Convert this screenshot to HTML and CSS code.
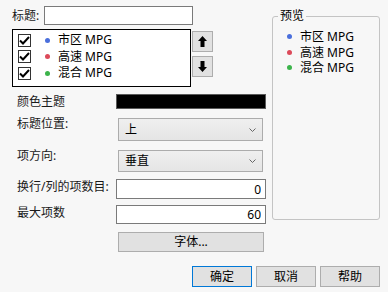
FILE: index.html
```html
<!DOCTYPE html>
<html lang="zh-CN">
<head>
    <meta charset="UTF-8">
    <title>图例设置</title>
    <link rel="stylesheet" href="styles.css">
</head>
<body>
    <div class="dialog">
        <div class="main">
            <div class="left">
                <div class="title-row">
                    <label class="title-label">标题:</label>
                    <input class="text-input title-input" type="text" value="">
                </div>
                <div class="list-row">
                    <div class="listbox">
                        <div class="item"><span class="check"><svg width="11" height="9" viewBox="0 0 11 9"><polyline points="1,4.5 4,7.5 10,1" fill="none" stroke="#000" stroke-width="2"/></svg></span><span class="dot blue"></span>市区 MPG</div>
                        <div class="item"><span class="check"><svg width="11" height="9" viewBox="0 0 11 9"><polyline points="1,4.5 4,7.5 10,1" fill="none" stroke="#000" stroke-width="2"/></svg></span><span class="dot red"></span>高速 MPG</div>
                        <div class="item"><span class="check"><svg width="11" height="9" viewBox="0 0 11 9"><polyline points="1,4.5 4,7.5 10,1" fill="none" stroke="#000" stroke-width="2"/></svg></span><span class="dot green"></span>混合 MPG</div>
                    </div>
                    <div class="arrows">
                        <button class="arrow-btn"><svg width="9" height="11" viewBox="0 0 9 11"><polygon points="4.5,0 9,5 6.5,5 6.5,11 2.5,11 2.5,5 0,5" fill="#000"/></svg></button>
                        <button class="arrow-btn"><svg width="9" height="11" viewBox="0 0 9 11"><polygon points="4.5,11 9,6 6.5,6 6.5,0 2.5,0 2.5,6 0,6" fill="#000"/></svg></button>
                    </div>
                </div>
                <div class="form">
                    <div class="row row-swatch">
                        <span class="label">颜色主题</span>
                        <span class="swatch"></span>
                    </div>
                    <div class="row row-pos">
                        <span class="label">标题位置:</span>
                        <div class="select"><span>上</span><svg width="7" height="4" viewBox="0 0 7 4"><polyline points="0.5,0.5 3.5,3.5 6.5,0.5" fill="none" stroke="#666" stroke-width="1"/></svg></div>
                    </div>
                    <div class="row row-dir">
                        <span class="label">项方向:</span>
                        <div class="select select-short"><span>垂直</span><svg width="7" height="4" viewBox="0 0 7 4"><polyline points="0.5,0.5 3.5,3.5 6.5,0.5" fill="none" stroke="#666" stroke-width="1"/></svg></div>
                    </div>
                    <div class="row row-wrap">
                        <span class="label">换行/列的项数目:</span>
                        <input class="text-input num-input" type="text" value="0">
                    </div>
                    <div class="row row-max">
                        <span class="label">最大项数</span>
                        <input class="text-input num-input num-short" type="text" value="60">
                    </div>
                    <div class="row row-font">
                        <span class="label"></span>
                        <button class="btn font-btn">字体...</button>
                    </div>
                </div>
            </div>
            <fieldset class="preview">
                <legend>预览</legend>
                <div class="preview-item"><span class="dot blue"></span>市区 MPG</div>
                <div class="preview-item"><span class="dot red"></span>高速 MPG</div>
                <div class="preview-item"><span class="dot green"></span>混合 MPG</div>
            </fieldset>
        </div>
        <div class="actions">
            <button class="btn action-btn default">确定</button>
            <button class="btn action-btn">取消</button>
            <button class="btn action-btn">帮助</button>
        </div>
    </div>
</body>
</html>
```

FILE: styles.css
```css
* {
    margin: 0;
    padding: 0;
    box-sizing: border-box;
}
body {
    width: 388px;
    height: 292px;
    background-color: #f7f7f7;
    font-family: "Noto Sans", "Noto Sans CJK SC", sans-serif;
    font-size: 12px;
    color: #1a1a1a;
    overflow: hidden;
}
button, input {
    font-family: inherit;
    font-size: 12px;
    color: #000;
}
.dialog {
    padding: 6px 8px 0 12px;
}
.main {
    display: flex;
    align-items: flex-start;
}
.left {
    width: 254px;
}
.title-row {
    display: flex;
    align-items: center;
    height: 19px;
}
.title-label {
    width: 32px;
    line-height: 14px;
}
.text-input {
    background-color: #fff;
    border: 1px solid #7a7a7a;
    outline: none;
    padding: 0 4px;
}
.title-input {
    width: 149px;
    height: 19px;
}
.list-row {
    display: flex;
    margin-top: 4px;
}
.listbox {
    width: 179px;
    height: 58px;
    border: 1px solid #000;
    background-color: #fff;
    padding: 2px 0 0 5px;
}
.item {
    display: flex;
    align-items: center;
    height: 16.5px;
    line-height: 16px;
    color: #000;
}
.check {
    display: flex;
    align-items: center;
    justify-content: center;
    width: 13px;
    height: 13px;
    border: 1px solid #333;
    background-color: #fff;
}
.dot {
    display: inline-block;
    width: 5px;
    height: 5px;
    border-radius: 50%;
    margin-right: 8px;
}
.item .dot {
    margin-left: 14px;
}
.dot.blue {
    background-color: #4a6fdc;
}
.dot.red {
    background-color: #dc4a5a;
}
.dot.green {
    background-color: #3cb44b;
}
.arrows {
    display: flex;
    flex-direction: column;
    gap: 4px;
    margin: 2px 0 0 1px;
}
.arrow-btn {
    display: flex;
    align-items: center;
    justify-content: center;
    width: 21px;
    height: 21px;
    background-color: #e1e1e1;
    border: 1px solid #adadad;
}
.form {
    margin-top: 7px;
    padding-left: 5px;
}
.row {
    display: flex;
    align-items: flex-start;
}
.label {
    width: 99px;
    flex-shrink: 0;
    line-height: 12px;
    color: #1a1a1a;
}
.swatch {
    width: 150px;
    height: 15px;
    background-color: #000;
    border: 1px solid #5a5a5a;
}
.row-swatch .label {
    line-height: 15px;
}
.row-pos {
    margin-top: 9px;
}
.row-dir {
    margin-top: 9px;
}
.select {
    display: flex;
    align-items: center;
    justify-content: space-between;
    width: 145px;
    height: 23px;
    margin-left: 2px;
    padding: 0 6px 0 6px;
    background: linear-gradient(#efefef, #e5e5e5);
    border: 1px solid #acacac;
    color: #000;
    line-height: 14px;
}
.select-short {
    height: 22px;
}
.row-wrap {
    margin-top: 7px;
}
.row-wrap .label,
.row-max .label {
    line-height: 16px;
}
.num-input {
    width: 150px;
    height: 20px;
    text-align: right;
}
.num-short {
    height: 19px;
}
.row-max {
    margin-top: 6px;
}
.row-font {
    margin-top: 8px;
}
.btn {
    background-color: #e1e1e1;
    border: 1px solid #adadad;
    line-height: 14px;
}
.font-btn {
    width: 146px;
    height: 20px;
    margin-left: 2px;
}
.preview {
    width: 108px;
    height: 211px;
    margin: 3px 0 0 6px;
    padding: 0 0 0 5px;
    border: 1px solid #c4c4c4;
    border-radius: 3px;
}
.preview legend {
    padding: 0 2px;
    line-height: 14px;
    color: #000;
}
.preview-item {
    display: flex;
    align-items: center;
    height: 15.5px;
    line-height: 15px;
    padding-left: 9px;
    color: #000;
}
.preview-item:first-of-type {
    margin-top: 6px;
}
.actions {
    display: flex;
    justify-content: flex-end;
    gap: 4px;
    margin-top: 14px;
}
.action-btn {
    width: 60px;
    height: 21px;
}
.action-btn.default {
    border-color: #0078d7;
}
```
